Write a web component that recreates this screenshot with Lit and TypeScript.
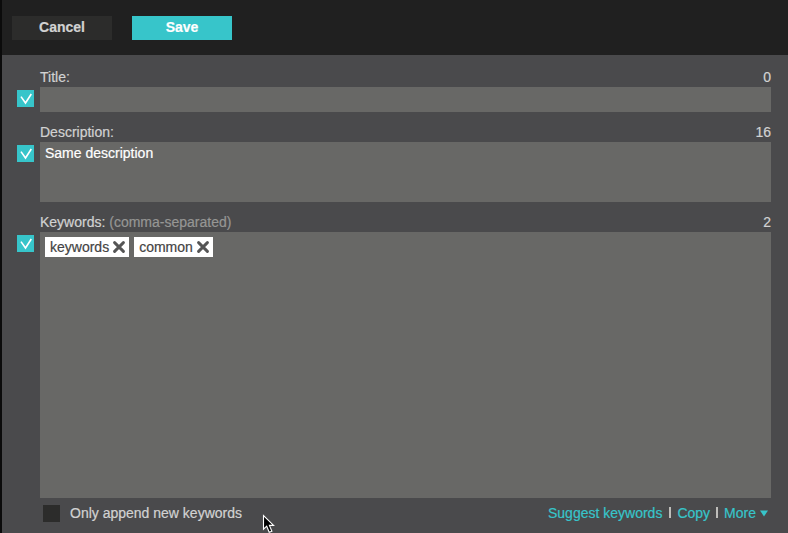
import { LitElement, html, css, svg } from "lit";
import { customElement, property } from "lit/decorators.js";

@customElement("check-box")
class CheckBox extends LitElement {
  @property({ type: Boolean, reflect: true }) checked = false;
  static styles = css`
    :host { display: block; width: 17px; height: 17px; background: #2c2c2b; flex: none; }
    :host([checked]) { background: #37c5ca; }
    svg { display: block; }
  `;
  render() {
    return html`<svg width="17" height="17" viewBox="0 0 17 17">
      ${this.checked ? svg`<path d="M4 6.6 8.5 13 14.3 4" fill="none" stroke="#fff" stroke-width="1.6"/>` : ""}
    </svg>`;
  }
}

@customElement("keyword-chip")
class KeywordChip extends LitElement {
  @property() label = "";
  static styles = css`
    :host { display: flex; align-items: center; height: 20px; box-sizing: border-box; padding: 0 4px 0 5px; background: #fff; color: #444; gap: 4px; line-height: 20px; }
    svg { display: block; flex: none; }
    .text { margin-top: -1px; }
  `;
  render() {
    return html`<span class="text">${this.label}</span>
      <svg width="12" height="12" viewBox="0 0 12 12"><path d="M1.6 1.6 10.4 10.4M10.4 1.6 1.6 10.4" stroke="#555" stroke-width="2.9" stroke-linecap="round"/></svg>`;
  }
}

@customElement("app-root")
class AppRoot extends LitElement {
  static styles = css`
    :host { display: flex; flex-direction: column; box-sizing: border-box; height: 533px; border-left: 2px solid #0b0b0b; background: #4a4a4c; font: 14px/18px "Liberation Sans", Arial, sans-serif; color: #d2d2d2; overflow: hidden; position: relative; white-space: nowrap; -webkit-text-stroke: 0.2px currentColor; }
    header { height: 55px; flex: none; box-sizing: border-box; padding: 16px 10px 0; background: #202020; display: flex; gap: 20px; }
    button { width: 100px; height: 24px; border: 0; padding: 0 0 1px; font: bold 14px/23px "Liberation Sans", Arial, sans-serif; background: #2c2c2b; color: #d2d2d2; }
    .save { background: #37c5ca; color: #fff; }
    main { padding: 13px 17px 0 15px; display: flex; flex-direction: column; }
    .field { display: grid; grid-template-columns: 17px 1fr; column-gap: 6px; grid-template-rows: 19px auto; margin-bottom: 11px; }
    .head { grid-column: 2; display: flex; justify-content: space-between; line-height: 19px; }
    .hint { color: #969694; }
    check-box { margin-top: 3px; }
    .box { background: #686866; box-sizing: border-box; padding: 2px 5px; color: #fff; }
    .title { height: 25px; }
    .description { height: 60px; }
    .keywords { height: 266px; padding: 5px; display: flex; gap: 5px; align-items: flex-start; }
    footer { display: flex; align-items: center; height: 19px; margin-top: -5px; padding: 0 3px 0 26px; }
    footer check-box { margin: 0; }
    .append { margin: -2px 0 0 10px; flex: 1; }
    .links { display: flex; align-items: center; color: #37c5ca; margin-top: -2px; }
    .bar { width: 2px; height: 11px; background: #bebdba; margin: 0 6px; }
    .first { margin-left: 7px; }
    .arrow { margin: 2px 0 0 4px; }
    .pointer { position: absolute; left: 260px; top: 514px; }
  `;
  render() {
    return html`
      <header><button>Cancel</button><button class="save">Save</button></header>
      <main>
        <div class="field">
          <div class="head"><span>Title:</span><span>0</span></div>
          <check-box checked></check-box><div class="box title"></div>
        </div>
        <div class="field">
          <div class="head"><span>Description:</span><span>16</span></div>
          <check-box checked></check-box><div class="box description">Same description</div>
        </div>
        <div class="field">
          <div class="head"><span>Keywords: <span class="hint">(comma-separated)</span></span><span>2</span></div>
          <check-box checked></check-box>
          <div class="box keywords">
            <keyword-chip label="keywords"></keyword-chip><keyword-chip label="common"></keyword-chip>
          </div>
        </div>
        <footer>
          <check-box></check-box><span class="append">Only append new keywords</span>
          <div class="links">
            <span>Suggest keywords</span><i class="bar first"></i><span>Copy</span><i class="bar"></i><span>More</span>
            <svg class="arrow" width="8" height="7" viewBox="0 0 8 7"><path d="M0 .5h8L4 6.5z" fill="#37c5ca"/></svg>
          </div>
        </footer>
      </main>
      <svg class="pointer" width="14" height="20" viewBox="0 0 14 20">
        <path d="M1.5 1.5V15.2L4.7 12.2 7.2 18.3 9.9 17.2 7.4 11.4H11.6Z" fill="#000" stroke="#fff" stroke-width="1.1"/>
      </svg>`;
  }
}
